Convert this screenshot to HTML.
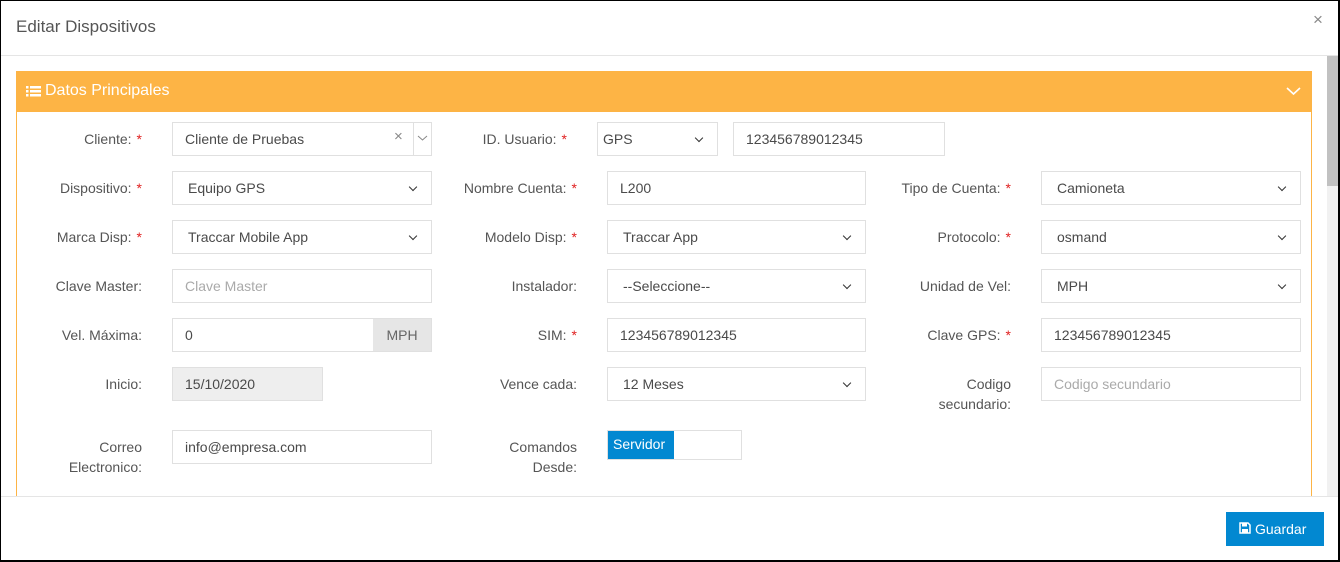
<!DOCTYPE html>
<html><head><meta charset="utf-8"><style>
*{box-sizing:border-box;margin:0;padding:0}
body{width:1340px;height:562px;overflow:hidden;background:#fff;font-family:"Liberation Sans",sans-serif;font-size:14px;color:#555;position:relative}
.a{position:absolute}
.frame{left:0;top:0;width:1340px;height:562px;border:2px solid #000;border-top-width:1px;border-left-width:1px}
.lbl{text-align:right;line-height:20px;color:#555}
.lbl b{color:#e02020;font-weight:normal;margin-left:5px}
.in{border:1px solid #e0e0e0;height:34px;line-height:32px;padding-left:12px;color:#4a4a4a;background:#fff}
.ph{color:#aaa}
.sel::after{content:"";position:absolute;right:15px;top:12px;width:5px;height:5px;border-right:1.6px solid #333;border-bottom:1.6px solid #333;transform:rotate(45deg)}
.sel{padding-left:15px}
</style></head><body>
<div class="a" style="left:16px;top:17px;font-size:17px;color:#555">Editar Dispositivos</div>
<div class="a" style="left:1313px;top:10px;font-size:17px;color:#888">×</div>
<div class="a" style="left:0;top:55px;width:1340px;height:1px;background:#e5e5e5"></div>
<div class="a" style="left:1327px;top:56px;width:13px;height:440px;background:#f1f1f1"></div>
<div class="a" style="left:1327px;top:56px;width:13px;height:130px;background:#c1c1c1"></div>
<div class="a" style="left:16px;top:71px;width:1296px;height:425px;border-left:1px solid #fdb445;border-right:1px solid #fdb445"></div>
<div class="a" style="left:16px;top:71px;width:1296px;height:41px;background:#fdb445;color:#fff;font-size:16px;line-height:40px;padding-left:29px">Datos Principales</div>
<svg class="a" style="left:26px;top:86px" width="15" height="11"><g fill="#fff"><rect x="0" y="0" width="2.5" height="2.5"/><rect x="4" y="0" width="11" height="2.5"/><rect x="0" y="4" width="2.5" height="2.5"/><rect x="4" y="4" width="11" height="2.5"/><rect x="0" y="8" width="2.5" height="2.5"/><rect x="4" y="8" width="11" height="2.5"/></g></svg>
<svg class="a" style="left:1286px;top:86px" width="15" height="10"><path d="M1 2l6.5 6 6.5-6" stroke="#fff" stroke-width="1.6" fill="none"/></svg>

<div class="a lbl" style="left:20px;top:129px;width:122px">Cliente:<b>*</b></div>
<div class="a in" style="left:172px;top:122px;width:260px">Cliente de Pruebas</div>
<div class="a" style="left:394px;top:128px;color:#888;font-size:15px">×</div>
<div class="a" style="left:413px;top:123px;width:1px;height:32px;background:#e0e0e0"></div>
<svg class="a" style="left:417px;top:135px" width="11" height="7"><path d="M1 1l4.5 4 4.5-4" stroke="#888" fill="none"/></svg>
<div class="a lbl" style="left:420px;top:129px;width:147px">ID. Usuario:<b>*</b></div>
<div class="a in sel" style="left:597px;top:122px;width:121px;padding-left:5px">GPS</div>
<div class="a in" style="left:733px;top:122px;width:212px">123456789012345</div>

<div class="a lbl" style="left:20px;top:178px;width:122px">Dispositivo:<b>*</b></div>
<div class="a in sel" style="left:172px;top:171px;width:260px">Equipo GPS</div>
<div class="a lbl" style="left:420px;top:178px;width:157px">Nombre Cuenta:<b>*</b></div>
<div class="a in" style="left:607px;top:171px;width:259px">L200</div>
<div class="a lbl" style="left:850px;top:178px;width:161px">Tipo de Cuenta:<b>*</b></div>
<div class="a in sel" style="left:1041px;top:171px;width:260px">Camioneta</div>

<div class="a lbl" style="left:20px;top:227px;width:122px">Marca Disp:<b>*</b></div>
<div class="a in sel" style="left:172px;top:220px;width:260px">Traccar Mobile App</div>
<div class="a lbl" style="left:420px;top:227px;width:157px">Modelo Disp:<b>*</b></div>
<div class="a in sel" style="left:607px;top:220px;width:259px">Traccar App</div>
<div class="a lbl" style="left:850px;top:227px;width:161px">Protocolo:<b>*</b></div>
<div class="a in sel" style="left:1041px;top:220px;width:260px">osmand</div>

<div class="a lbl" style="left:20px;top:276px;width:122px">Clave Master:</div>
<div class="a in ph" style="left:172px;top:269px;width:260px">Clave Master</div>
<div class="a lbl" style="left:420px;top:276px;width:157px">Instalador:</div>
<div class="a in sel" style="left:607px;top:269px;width:259px">--Seleccione--</div>
<div class="a lbl" style="left:850px;top:276px;width:161px">Unidad de Vel:</div>
<div class="a in sel" style="left:1041px;top:269px;width:260px">MPH</div>

<div class="a lbl" style="left:20px;top:325px;width:122px">Vel. Máxima:</div>
<div class="a in" style="left:172px;top:318px;width:260px">0</div>
<div class="a" style="left:373px;top:319px;width:58px;height:32px;background:#e6e6e6;line-height:32px;text-align:center;color:#666">MPH</div>
<div class="a lbl" style="left:420px;top:325px;width:157px">SIM:<b>*</b></div>
<div class="a in" style="left:607px;top:318px;width:259px">123456789012345</div>
<div class="a lbl" style="left:850px;top:325px;width:161px">Clave GPS:<b>*</b></div>
<div class="a in" style="left:1041px;top:318px;width:260px">123456789012345</div>

<div class="a lbl" style="left:20px;top:374px;width:122px">Inicio:</div>
<div class="a in" style="left:172px;top:367px;width:151px;background:#eee">15/10/2020</div>
<div class="a lbl" style="left:420px;top:374px;width:157px">Vence cada:</div>
<div class="a in sel" style="left:607px;top:367px;width:259px">12 Meses</div>
<div class="a lbl" style="left:850px;top:374px;width:161px">Codigo<br>secundario:</div>
<div class="a in ph" style="left:1041px;top:367px;width:260px">Codigo secundario</div>

<div class="a lbl" style="left:20px;top:437px;width:122px">Correo<br>Electronico:</div>
<div class="a in" style="left:172px;top:430px;width:260px">info@empresa.com</div>
<div class="a lbl" style="left:420px;top:437px;width:157px">Comandos<br>Desde:</div>
<div class="a" style="left:607px;top:430px;width:135px;height:30px;border:1px solid #e0e0e0"></div>
<div class="a" style="left:608px;top:431px;width:66px;height:28px;background:#0288d1;color:#fff;line-height:27px;padding-left:5px">Servidor</div>

<div class="a" style="left:0;top:496px;width:1340px;height:1px;background:#e5e5e5"></div>
<div class="a" style="left:1226px;top:512px;width:98px;height:34px;background:#0288d1;color:#fff;line-height:34px;padding-left:29px;font-size:14px">Guardar</div>
<svg class="a" style="left:1239px;top:522px" width="12" height="12"><path d="M1 1h8l2 2v8H1z" fill="none" stroke="#fff" stroke-width="1.5"/><rect x="3" y="1.5" width="5" height="3" fill="#fff"/><rect x="3" y="7" width="6" height="3.5" fill="#fff"/></svg>
<div class="a frame"></div>
</body></html>
